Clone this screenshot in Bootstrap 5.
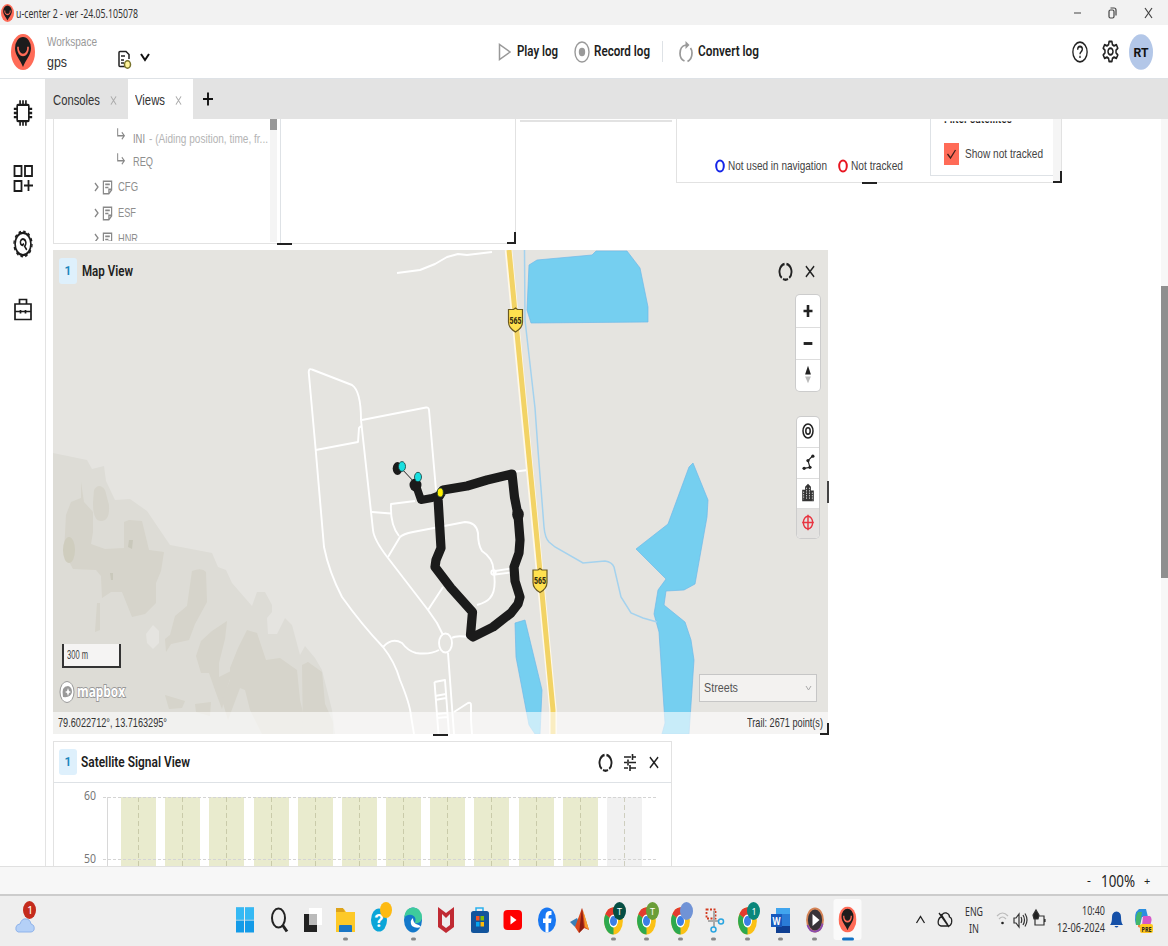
<!DOCTYPE html>
<html lang="en">
<head>
<meta charset="utf-8">
<title>u-center 2</title>
<link href="https://cdn.jsdelivr.net/npm/bootstrap@5.3.0/dist/css/bootstrap.min.css" rel="stylesheet">
<style>
body{width:1168px;height:946px;overflow:hidden;font:14px/16px "Liberation Sans",sans-serif;color:#333;background:#fff}
svg{display:block;flex:none}
/* condensed label: the width is set from data-w */
.fit{display:block;flex:none;white-space:nowrap;overflow:visible}
.fit>span{display:inline-block;transform-origin:0 50%}
.seg{font-family:"Noto Sans",sans-serif}
.lib{font-family:"Liberation Sans",sans-serif}
.titlebar{height:25px;background:#f2f2f2;padding:1px 0 0 1px}
.topbar{height:54px}
.topbar .fit{font-size:14px}
.rail{width:46px;border-right:1px solid #e3e3e3;padding-top:20px}
.rail svg{margin:0 0 37px 13px}
.tabs{height:40px;background:#e3e3e3;font-size:15px}
.tab-on{background:#fff;width:65px}
.work{height:747px;overflow:hidden}
.panel{border:1px solid #e2e2e2;background:#fff;position:relative;flex:none}
.tree{width:223px;height:123px;overflow:hidden;font-size:13.5px;color:#8e8e8e}
.tree .rowline{display:flex;align-items:center;height:26px}
.tree i{width:7px;background:#f4f4f4;position:absolute;left:216px;top:0;height:123px}
.tree i:before{content:"";display:block;height:11px;background:#999}
.grip{position:absolute;background:#222}
.corner{position:absolute;width:9px;height:12px;border:solid #222;border-width:0 2px 2px 0;right:-1px;bottom:-1px}
.num{width:18px;height:26px;background:#def0fc;color:#1a86bd;border-radius:3px;font:600 12px Roboto,sans-serif}
.ttl{font-family:Roboto,sans-serif;font-weight:600;font-size:14.5px!important;color:#1d1d1d;padding-top:1px}
.over{position:absolute}
.ctl{width:24px;background:#fff;border-radius:4px;box-shadow:0 0 0 1px #ccc}
.ctl>svg+svg{border-top:1px solid #ddd}
.foot{left:0;right:0;bottom:0;height:22px;background:rgba(255,255,255,.6);font-size:13px}
.scale{left:9px;top:394px;width:59px;height:24px;border:2px solid #333;border-top:0;background:#f5f4f3;font-size:12px;color:#444;padding:3px 0 0 3px}
.sel{left:646px;top:424px;width:118px;height:28px;border:1px solid #c6c6c6;background:#f3f2f0;color:#555;font-size:13.5px}
.bars{left:67px;top:14px;gap:9.18px}
.bars div{width:35px;height:72px;flex:none;background:repeating-linear-gradient(180deg,rgba(150,150,110,.38) 0 5px,transparent 5px 8px) 17px 0/1px 72px no-repeat #e9ebce}
.bars div:last-child{background-color:#f1f1f1}
.dash{left:49px;width:553px;border-top:1px dashed #d4d4d4}
.axis{left:53px;top:14px;height:72px;border-left:1px solid #d8d8d8}
.status{height:28px;background:#f7f7f7;border-top:1px solid #e0e0e0;padding-left:1087px}
.task{height:52px;background:#eee;border-top:2px solid #ccc}
.task svg.ap{width:33.5px;height:50px}
.sbar{width:7px;height:747px;background:#f7f7f7;padding-top:167px}
.sbar div{height:292px;background:#8f8f8f}
</style>
</head>
<body class="d-flex flex-column">
<svg width="0" height="0" class="position-absolute">
<defs>
<g id="logo"><circle cx="12" cy="12" r="12" fill="#ff6b57"/><path d="M12 22C9 17 4 14 4 9.500a8 7.500 0 0 1 16 0C20 14 15 17 12 22z" fill="#1c1c1c"/><path d="M7 8.500v1a5 4.500 0 0 0 10 0v-1" fill="none" stroke="#ff6b57" stroke-width="1.700"/></g>
<g id="ring" fill="none" stroke="#222" stroke-width="3"><path d="M10.500 2.500A10 10 0 0 0 6 20M8 21.500a10 10 0 0 0 8 0M18 20A10 10 0 0 0 13.500 2.500"/></g>
<path id="cross" d="M3 3L21 21M21 3L3 21" fill="none"/>
<g id="note" fill="none" stroke="#888" stroke-width="2.600"><path d="M3 2h18v14l-6 6H3zM21 15h-6v7M7 7h10M7 12h7"/></g>
<g id="sub" fill="none" stroke="#888" stroke-width="2.400"><path d="M4 2v13h16M14 9l6 6-6 6"/></g>
<g id="shield"><path d="M-7-10.500h5l2-1.500 2 1.500h5V2Q7 8 0 12Q-7 8-7 2z" fill="#ffe14f" stroke="#6b5a20" stroke-width="1.200"/><text y="3.500" text-anchor="middle" font-family="Roboto, sans-serif" font-weight="900" font-size="9.500" textLength="12" lengthAdjust="spacingAndGlyphs" fill="#332c10">565</text></g>
<g id="chrome"><g transform="translate(17.500 25) scale(.78 1.120)"><circle r="12" fill="#fbc116"/><path d="M0 0L-10.400-6A12 12 0 0 1 10.400-6z" fill="#e33b2e"/><path d="M0 0L0 12A12 12 0 0 1-10.400-6z" fill="#2da94f"/><path d="M0-6H10.400A12 12 0 0 0-10.400-6z" fill="#e33b2e"/><circle r="5.800" fill="#fff"/><circle r="4.500" fill="#3b7fe6"/></g></g>
<rect id="dot" x="14" y="41.500" width="5" height="3" rx="1.500" fill="#888"/>
</defs></svg>

<div class="titlebar d-flex align-items-center seg">
<svg width="13" height="18" viewBox="0 0 24 24" preserveAspectRatio="none"><use href="#logo"/></svg>
<div class="fit" style="margin-left:2px;font-size:13px" data-w="122">u-center 2 - ver -24.05.105078</div>
<svg class="ms-auto" width="96" height="20" viewBox="0 0 96 20" fill="none" stroke="#444" stroke-width="1.200"><path d="M2 10h7M73 5l7 10M80 5l-7 10"/><rect x="37" y="7" width="5" height="8" rx="1.500"/><path d="M38.500 5h3.500q2 0 2 2v5.500"/></svg>
</div>

<div class="topbar d-flex align-items-center">
<svg style="margin-left:11px" width="24" height="36" viewBox="0 0 24 24" preserveAspectRatio="none"><use href="#logo"/></svg>
<div style="margin-left:12px;width:71px"><div class="fit mb-1" style="font-size:13px;color:#999" data-w="50">Workspace</div><div class="fit" data-w="20" style="font-size:15px">gps</div></div>
<svg style="margin-top:15px" width="14" height="19" viewBox="0 0 14 19" fill="none" stroke="#222" stroke-width="1.500"><path d="M7 16.500H2Q1 16.500 1 15.500V2.500Q1 1.500 2 1.500H8l3 3V9M3 6h4M3 10h3M3 13h3"/><ellipse cx="9.500" cy="14.500" rx="3" ry="3.700" fill="#fff49a" stroke="#77722c"/></svg>
<svg style="margin:11px 0 0 8px" width="10" height="9" viewBox="0 0 10 9"><path d="M1 1l4 6 4-6" fill="none" stroke="#111" stroke-width="2"/></svg>
<svg style="margin-left:348px" width="13" height="20" viewBox="0 0 13 20"><path d="M1.500 2.500v15L12 10z" fill="none" stroke="#999" stroke-width="1.500"/></svg>
<div class="fit ttl" style="margin-left:6px" data-w="41">Play log</div>
<svg style="margin-left:16px" width="16" height="22" viewBox="0 0 16 22"><ellipse cx="8" cy="11" rx="7" ry="10" fill="none" stroke="#999" stroke-width="1.400"/><ellipse cx="8" cy="11" rx="3.200" ry="4.200" fill="#999"/></svg>
<div class="fit ttl" style="margin-left:4px" data-w="56">Record log</div>
<div class="border-start" style="height:21px;margin-left:12px;width:17px"></div>
<svg width="14" height="22" viewBox="0 0 14 22" fill="none" stroke="#999" stroke-width="1.700"><path d="M5.500 20Q1 18 1 12.500Q1 5 7 4M8.500 20.500Q13 18 13 12Q13 9 11.500 7"/><path d="M6.500 0l4 4-4 4z" fill="#999" stroke="none"/></svg>
<div class="fit ttl" style="margin-left:5px" data-w="61">Convert log</div>
<div class="ms-auto d-flex align-items-center" style="gap:14px;margin-right:15px">
<svg width="16" height="22" viewBox="0 0 24 24" preserveAspectRatio="none" fill="none" stroke="#222" stroke-width="2"><circle cx="12" cy="12" r="10.700"/><path d="M8.500 9.500q0-3.500 3.500-3.500t3.500 3q0 1.500-1.800 2.700-1.700 1-1.700 2.800M12 16v2.500"/></svg>
<svg width="17" height="23" viewBox="0 0 24 24" preserveAspectRatio="none" fill="none" stroke="#222" stroke-width="2.100" stroke-linejoin="round"><path d="M10 1.500h4l.7 3.300 2.300 1.300 3.300-1.100 2 3.500-2.500 2.300v2.500l2.500 2.300-2 3.500-3.300-1.100-2.300 1.300-.7 3.200h-4l-.7-3.200L7 18l-3.300 1.100-2-3.500 2.500-2.300v-2.500L1.700 8.500l2-3.500L7 6.100l2.300-1.300z"/><circle cx="12" cy="12" r="3.500"/></svg>
<svg style="margin-left:-4px" width="24" height="36" viewBox="0 0 24 36"><ellipse cx="12" cy="18" rx="12" ry="17.800" fill="#b3c7e8"/><text x="4.500" y="22.500" font-size="13.500" font-weight="700" font-family="Roboto, sans-serif" textLength="15" lengthAdjust="spacingAndGlyphs" fill="#111">RT</text></svg>
</div>
</div>

<div class="d-flex border-top" style="height:788px">
<div class="rail">
<svg width="20" height="28" viewBox="0 0 24 24" preserveAspectRatio="none" fill="none" stroke="#1c1c1c" stroke-width="2"><rect x="5" y="5" width="14" height="14" rx="1"/><path d="M8.500 1v4M12 1v4M15.500 1v4M8.500 19v4M12 19v4M15.500 19v4M1 8.500h4M1 12h4M1 15.500h4M19 8.500h4M19 12h4M19 15.500h4"/></svg>
<svg style="margin-bottom:38px" width="20" height="28" viewBox="0 0 20 28" fill="none" stroke="#1c1c1c" stroke-width="1.800"><path d="M1.500 2h7v10h-7zM12 2h7v10h-7zM1.500 17h7v10h-7zM11 21.500h9M15.500 16v11"/></svg>
<svg width="20" height="28" viewBox="0 0 24 24" preserveAspectRatio="none" fill="none" stroke="#1c1c1c"><circle cx="12" cy="12" r="9.500" stroke-width="2"/><circle cx="12" cy="12" r="10.800" stroke-width="1.600" stroke-dasharray="2.900 2.750"/><path d="M9 9.500a3.500 3.500 0 0 1 6.500 1.500q0 2-1.500 3l2.500 3M9 9.500q-.5 3.500 2.500 3.500l1.500-1.500" stroke-width="1.800"/></svg>
<svg width="20" height="28" viewBox="0 0 20 28" fill="none" stroke="#1c1c1c" stroke-width="1.700"><path d="M2 9h16v15.500H2zM6.500 9V4.500h7V9M2 16.500h16M7.500 15v3.500M12.500 15v3.500"/></svg>
</div>
<div class="flex-grow-1">
<div class="tabs d-flex align-items-stretch">
<div class="d-flex align-items-center" style="width:82px;padding:2px 0 0 7px"><div class="fit" data-w="47">Consoles</div><svg style="margin-left:10px" width="7" height="11" viewBox="0 0 24 24" preserveAspectRatio="none" stroke="#aaa" stroke-width="3"><use href="#cross"/></svg></div>
<div class="tab-on d-flex align-items-center" style="padding:2px 0 0 7px"><div class="fit" data-w="30">Views</div><svg style="margin-left:10px" width="7" height="11" viewBox="0 0 24 24" preserveAspectRatio="none" stroke="#aaa" stroke-width="3"><use href="#cross"/></svg></div>
<svg class="align-self-center" style="margin-left:10px" width="10" height="14" viewBox="0 0 10 14"><path d="M0 7h10M5 .5v13" stroke="#111" stroke-width="1.900"/></svg>
</div>
<div class="d-flex">
<div class="work flex-grow-1" style="padding-left:7px">
<div class="d-flex align-items-start" style="height:131px">
<div class="panel d-flex border-top-0" style="width:463px;height:125px">
<div class="tree">
<div class="rowline" style="height:23px;padding:16px 0 0 62px"><svg width="10" height="14" style="margin-top:-9px" viewBox="0 0 24 24" preserveAspectRatio="none"><use href="#sub"/></svg><div class="fit" style="margin-left:7px" data-w="12">INI</div><div class="fit" style="margin-left:4px;color:#b4b4b4" data-w="119">- (Aiding position, time, fr...</div></div>
<div class="rowline" style="height:32px;padding:8px 0 0 62px"><svg width="10" height="14" style="margin-top:-7px" viewBox="0 0 24 24" preserveAspectRatio="none"><use href="#sub"/></svg><div class="fit" style="margin-left:7px" data-w="20">REQ</div></div>
<div class="rowline" style="padding-left:39px"><svg width="7" height="10" viewBox="0 0 7 10"><path d="M2 1l3 4-3 4" fill="none" stroke="#888" stroke-width="1.300"/></svg><svg style="margin:0 5px 0 2px" width="11" height="15" viewBox="0 0 24 24" preserveAspectRatio="none"><use href="#note"/></svg><div class="fit" data-w="20">CFG</div></div>
<div class="rowline" style="padding-left:39px"><svg width="7" height="10" viewBox="0 0 7 10"><path d="M2 1l3 4-3 4" fill="none" stroke="#888" stroke-width="1.300"/></svg><svg style="margin:0 5px 0 2px" width="11" height="15" viewBox="0 0 24 24" preserveAspectRatio="none"><use href="#note"/></svg><div class="fit" data-w="18">ESF</div></div>
<div class="rowline" style="padding-left:39px;height:15px;overflow:hidden;align-items:flex-start"><svg style="margin-top:7px" width="7" height="10" viewBox="0 0 7 10"><path d="M2 1l3 4-3 4" fill="none" stroke="#888" stroke-width="1.300"/></svg><svg style="margin:6px 5px 0 2px" width="11" height="15" viewBox="0 0 24 24" preserveAspectRatio="none"><use href="#note"/></svg><div class="fit" style="margin-top:5px" data-w="20">HNR</div></div>
<i></i></div>
<div class="border-start" style="margin-left:3px"></div>
<b class="grip" style="left:223px;bottom:-2px;width:15px;height:2px"></b><b class="corner"></b>
</div>
<div style="margin-left:4px;width:152px;height:3px;border-bottom:2px solid #e2e2e2"></div>
<div class="panel d-flex border-top-0" style="margin-left:4px;width:386px;height:64px;color:#444;font-size:13px">
<div class="d-flex align-items-center" style="width:254px;padding:31px 0 0 38px"><svg width="10" height="14"><ellipse cx="5" cy="7" rx="3.800" ry="5.500" fill="none" stroke="#1525e8" stroke-width="2"/></svg><div class="fit" style="margin-left:3px" data-w="99">Not used in navigation</div><svg style="margin-left:11px" width="10" height="14"><ellipse cx="5" cy="7" rx="3.800" ry="5.500" fill="none" stroke="#e81520" stroke-width="2"/></svg><div class="fit" style="margin-left:3px" data-w="52">Not tracked</div></div>
<div class="border-start border-bottom" style="width:124px;height:57px;padding-left:13px"><div class="d-flex align-items-end" style="height:7px"><div class="fit ttl" style="font-size:13px!important;margin-bottom:-1px;clip-path:inset(11px 0 0 0)" data-w="68">Filter satellites</div></div>
<div class="d-flex align-items-center" style="margin-top:17px"><svg width="15" height="22" viewBox="0 0 15 22"><path d="M0 0h15v22H0z" fill="#ff6b57"/><path d="M3.500 11l3 4 5-8" fill="none" stroke="#40201c" stroke-width="1.300"/></svg><div class="fit" style="margin-left:6px" data-w="78">Show not tracked</div></div></div>
<div style="width:8px;background:#f5f5f5;height:63px"></div>
<b class="grip" style="left:185px;bottom:-2px;width:15px;height:2px"></b><b class="corner"></b>
</div>
</div>

<div class="panel border-0" style="width:775px;height:484px;background:#e5e4e0">
<svg width="775" height="484" viewBox="53 250 775 484" fill="none">
<path d="M53 453L87 460L92 469L104 466L106 481L115 500L130 499L147 511L170 545L212 553L218 567L226 570L232 583L252 606L257 592L265 592L272 605V612L267 618L268 634H277L285 618L292 625L300 655L305 646L315 658L322 670L332 710L335 734H53z" fill="#dddcd6"/>
<g fill="#d6d4ca" opacity=".9"><path d="M81 482L84 502L93 512V532L91 544L105 549L124 548V522L129 520L142 521L149 550L164 552L161 571L156 583V603L145 614L132 617L122 592L111 592L102 598L101 576L96 570L73 569L64 552L66 515L71 502L81 498z"/><path d="M94 490q5-8 11 0l4 15q1 16-8 16-8 0-8-18z"/><path d="M192 571q10-4 14 1l1 30-12 22-6 16-18 4-5 8-1-13 5-4 5-19 12-10z"/><path d="M227 621l-15 10-11 10-5 15 5 17 8 0 7 20 6 16 4-18 7-21-14 7 0-14 6-24z"/><path d="M238 648L247 630L257 633L266 660L280 658L297 670L300 700L308 734H262L250 710L245 690L240 688L228 720L222 700L230 680V668z"/><path d="M302 665l6-3 14 10 3 32 8 18v12h-30z"/><path d="M165 695l20 6-3 7-13 1zM195 704l16-2-1 14-14-4zM97 603h3l0 27-5 2z"/></g>
<ellipse cx="69" cy="550" rx="6" ry="13" fill="#cfcdbe"/><path d="M129 540h4l-1 9-4-2zM110 573h3v7h-2z" fill="#c9c8bb"/><path d="M146 634l7-9 6 6v12l-6 6-6-6z" fill="#e5e4e0"/>
<g fill="#75cff0" stroke="#6fb9ea" stroke-width=".7"><path d="M529 265L537 260L592 255L596 251H627L640 268L648 307V322L531 323L527 310z"/><path d="M693 463L708 500L707 517L695 584L684 590L666 591L664 605L685 622L691 640L694 660L689 734H662L665 723L659 632L654 614L658 590L666 579L636 549L668 524L689 467z"/><path d="M515 623L525 620L542 690L540 734H535L529 725L516 657z"/></g>
<path d="M524.500 250L525 320L535 408L538 450L544 527Q545 538 549 542L555 547L583 563L605 561Q612 562 614 567L621 597L631 613L643 618L657 622" stroke="#a4d2ee" stroke-width="1.500"/>
<g stroke="#fff" stroke-width="1.900" stroke-linejoin="round"><path d="M397 273L420 270L435 264L447 257L458 254L467 255L492 252"/><path d="M443 635L437 623L428 610L388 558Q374 540 373 530L361 420Q361 391 352 385L312 369.500Q309 368 308.700 372L315.700 450L324 547Q329 572 342 597Q362 625 383 647Q395 662 400 680Q410 704 411 716L414 734"/><path d="M315.700 450L358 442L359 428L361 426M362 420L426 407.500Q428.500 407 429 410L436 490M372 512L391 513.500M415 501L391 504Q390 525 399 536M388 557L400 537Q403 534 413 532L465 522Q476 522 478 533Q478 545 482 551Q493 558 493.500 570Q497 590 490 598Q487 602 477 605M495 571L511 568.500M495 574.500L511 572.500M428 610L443 587M512 472L528 470"/><circle cx="493.500" cy="572.500" r="2.200"/><ellipse cx="445.500" cy="643" rx="6.500" ry="9.500"/><path d="M452 638Q456 635 468 637M439 650Q430 655 416 653Q408 651 402 643Q392 637 383 647M448 653L454 734M434.500 682L445 680L449 734M434.500 682L438.500 734M435 696L446 694M435 700L446 698M437 714L447 713M437 718L447 717M454 712L468 703Q471 702 471 705V720L472 734"/></g>
<path d="M508.500 250L537 545L553 710V734" stroke="#fff8e6" stroke-width="7.500"/><path d="M509 250L537.500 545L553 710V734" stroke="#f2d365" stroke-width="5"/>
<path d="M401 468L416 484" stroke="#222"/>
<g stroke="#1b1b1b" stroke-width="9.200" stroke-linejoin="round" stroke-linecap="round"><path stroke-width="8" d="M415.500 484L421 500L432 498L440 495"/><path d="M438 498L443 490L467 486L487 480L512 474L514.500 497L518 515L520 540L519 553L514 567L515 581L520 597L518 604L511 613L493 627L473 637L470.500 635L472.500 612L451 588L435 567L436 560L441 548L438 498z"/></g>
<g fill="#1b1b1b"><ellipse cx="397.500" cy="468.500" rx="4.800" ry="6.500"/><ellipse cx="415.500" cy="485" rx="6" ry="6.500"/><ellipse cx="518" cy="514.500" rx="5.800" ry="7"/></g>
<g stroke="#173b3b" stroke-width=".8"><ellipse cx="402" cy="466.500" rx="3.500" ry="4.900" fill="#19e0e0"/><ellipse cx="418" cy="477" rx="3.500" ry="4.700" fill="#19e0e0"/><ellipse cx="440.300" cy="492.500" rx="3" ry="4.500" fill="#ffef00"/></g>
<use href="#shield" x="515.500" y="320"/><use href="#shield" x="540" y="580.500"/>
<g transform="translate(67 692)"><ellipse rx="7" ry="10.500" fill="#fff" stroke="#999"/><path d="M-4 5Q-6-6 1-6Q5-5 5 0Q4 6-4 5z" fill="#999"/><path d="M1-4l1 3 2 1-2 1-1 3-1-3-2-1 2-1z" fill="#fff"/></g>
<text x="77" y="697" font-family="Open Sans" font-weight="700" font-size="15.500" textLength="48" lengthAdjust="spacingAndGlyphs" fill="#fff" stroke="#999" stroke-width="1.800" paint-order="stroke">mapbox</text>
</svg>
<div class="over d-flex align-items-center" style="left:6px;top:8px"><div class="num d-flex align-items-center justify-content-center">1</div><div class="fit ttl" style="margin-left:5px" data-w="51">Map View</div></div>
<div class="over d-flex" style="left:725px;top:12px;gap:12px"><svg width="15" height="19" viewBox="0 0 24 24" preserveAspectRatio="none"><use href="#ring"/></svg><svg style="margin-top:3px" width="10" height="13" viewBox="1 1 22 22" preserveAspectRatio="none" stroke="#222" stroke-width="3"><use href="#cross"/></svg></div>
<div class="over ctl" style="left:743px;top:45px"><svg width="24" height="32" viewBox="0 0 24 32"><path d="M7.500 16h9M12 10v12" stroke="#222" stroke-width="2.600"/></svg><svg width="24" height="32" viewBox="0 0 24 32"><path d="M7.500 16h9" stroke="#222" stroke-width="3"/></svg><svg width="24" height="32" viewBox="0 0 24 32"><path d="M9 15l3-9 3 9z" fill="#222"/><path d="M9 17l3 7 3-7z" fill="#bbb"/></svg></div>
<div class="over ctl" style="left:744px;top:167px;width:22px"><svg width="22" height="30" viewBox="0 0 22 30" fill="none" stroke="#222" stroke-width="1.500"><ellipse cx="11" cy="14" rx="5" ry="7"/><ellipse cx="11" cy="14" rx="2.200" ry="3.200"/></svg>
<svg width="22" height="31" viewBox="0 0 22 31"><path d="M7 21l6-1-2-7 5-5" fill="none" stroke="#222" stroke-width="1.200"/><g fill="#222"><circle cx="7" cy="21" r="1.700"/><circle cx="13" cy="20" r="1.700"/><circle cx="11" cy="13" r="1.700"/><circle cx="16" cy="8.500" r="1.700"/></g></svg>
<svg width="22" height="30" viewBox="0 0 22 30"><path d="M5 23V11h3V8l3-3 3 3v4h3v11z" fill="#333"/><path d="M6.500 13v8M9.500 9v12M12.500 9v12M15.500 14v8" stroke="#ddd" stroke-width=".9" stroke-dasharray="1.500 1"/></svg>
<svg style="background:#e3e2e0;border-radius:0 0 4px 4px" width="22" height="30" viewBox="0 0 22 30" fill="none" stroke="#e83440" stroke-width="1.500"><ellipse cx="11" cy="14" rx="4.800" ry="6.500"/><path d="M11 6v16M5 14h12"/></svg></div>
<div class="over scale lib"><div class="fit" data-w="21">300 m</div></div>
<div class="over sel d-flex align-items-center"><div class="fit" style="margin-left:4px" data-w="34">Streets</div><svg class="ms-auto me-1" width="7" height="6"><path d="M1 1l2.500 4L6 1" fill="none" stroke="#aaa"/></svg></div>
<div class="over foot d-flex align-items-center justify-content-between lib" style="padding:0 5px"><div class="fit" data-w="109">79.6022712°, 13.7163295°</div><div class="fit" data-w="76">Trail: 2671 point(s)</div></div>
<b class="grip" style="left:380px;bottom:-2px;width:15px;height:2px"></b><b class="grip" style="right:-1px;top:231px;width:2px;height:22px;background:#444"></b><b class="corner"></b>
</div>

<div class="panel" style="width:619px;height:140px;margin-top:7px">
<div class="d-flex align-items-center border-bottom" style="height:41px;padding:0 12px 0 5px"><div class="num d-flex align-items-center justify-content-center">1</div><div class="fit ttl" style="margin-left:4px" data-w="109">Satellite Signal View</div>
<svg class="ms-auto" width="15" height="19" viewBox="0 0 24 24" preserveAspectRatio="none"><use href="#ring"/></svg><svg style="margin:0 13px 0 11px" width="12" height="17" viewBox="0 0 12 17"><path d="M0 3h7M9 3h3M8.500 0v6M0 8.500h3M5 8.500h7M4 5.500v6M0 14h4M6 14h6M6 11v6" stroke="#222" stroke-width="1.600"/></svg><svg width="10" height="13" viewBox="1 1 22 22" preserveAspectRatio="none" stroke="#222" stroke-width="3"><use href="#cross"/></svg></div>
<div class="position-relative" style="padding:4px 0 0 30px;color:#777;font-size:13px"><div class="fit seg" data-w="12">60</div><div class="fit seg" style="margin-top:48px;line-height:14px" data-w="12">50</div>
<div class="over bars d-flex"><div></div><div></div><div></div><div></div><div></div><div></div><div></div><div></div><div></div><div></div><div></div><div></div></div>
<div class="over dash" style="top:14px"></div><div class="over dash" style="top:76px"></div><div class="over axis"></div></div>
</div>
</div>
<div class="sbar"><div></div></div>
</div>
</div>
</div>

<div class="status d-flex align-items-center seg" style="color:#222"><div style="width:14px;font-size:12px">-</div><div class="fit" style="font-size:15.500px" data-w="34">100%</div><div style="margin-left:9px;font-size:11px">+</div></div>

<div class="task d-flex align-items-start seg">
<svg width="228" height="50"><path d="M18 36q-3-1-2-5 1-3 4-3 2-6 6-5 4 0 5 5 4 1 3 6-1 2-3 2z" fill="#b4d0f7" stroke="#8fb3ea"/><ellipse cx="29.500" cy="14" rx="6.500" ry="9" fill="#c42b1c"/><text x="27" y="18" font-size="11" fill="#fff">1</text></svg>
<svg class="ap" viewBox="0 0 33.500 50"><path d="M8 11.500h8v12H8zM17 11.500h9v12h-9zM8 24.500h8v12H8zM17 24.500h9v12h-9z" fill="#149be8"/><path d="M8 11.500h8v12H8zM17 11.500h9v12h-9z" fill="#35b9f4"/></svg>
<svg class="ap" viewBox="0 0 33.500 50" fill="none" stroke="#222" stroke-width="2"><ellipse cx="16.500" cy="22" rx="6.500" ry="9.500"/><path d="M20.500 29l4.500 6.500" stroke-width="3"/></svg>
<svg class="ap" viewBox="0 0 33.500 50"><path d="M14 12h13v17H14z" fill="#fff"/><path d="M9 18h13v18H9z" fill="#222"/><path d="M14 18h8v11h-8z" fill="#bbb"/></svg>
<svg class="ap" viewBox="0 0 33.500 50"><path d="M7 13h8l2 3h9v20H7z" fill="#fdc928"/><path d="M7 12h7l2 4H7z" fill="#dda31a"/><path d="M10 36v-6q0-1 1-1h11q1 0 1 1v6z" fill="#1a76c5"/><use href="#dot"/></svg>
<svg class="ap" viewBox="0 0 33.500 50"><ellipse cx="17" cy="24" rx="8" ry="11.500" fill="#0aa5d8"/><text x="12.500" y="31" font-size="19" font-weight="700" fill="#fff" font-family="Roboto" textLength="9" lengthAdjust="spacingAndGlyphs">?</text><ellipse cx="24" cy="14" rx="6" ry="8" fill="#fdba12"/></svg>
<svg class="ap" viewBox="0 0 33.500 50"><ellipse cx="17" cy="24" rx="9" ry="12.500" fill="#1378ca"/><path d="M8 22Q9 11.500 17 11.500Q26 12 26 22Q25 28 19 27Q21 21 16 19Q11 18 8 22z" fill="#3ecb9c"/><path d="M17 22q-4 3-1 8 4 3 9 1-1-2-5-3-3-2-3-6z" fill="#fff"/><use href="#dot" x="1"/></svg>
<svg class="ap" viewBox="0 0 33.500 50"><path d="M9 11l8 6 8-6v20l-8 6-8-6zM13 18v11l4 3 4-3V18l-4 4z" fill="#c02a33" fill-rule="evenodd"/></svg>
<svg class="ap" viewBox="0 0 33.500 50"><path d="M13 15v-3h7v3" fill="none" stroke="#2bb1ee" stroke-width="1.500"/><rect x="8" y="15" width="18" height="22" rx="2.500" fill="#12549c"/><path d="M13 20h3.500v4.500H13z" fill="#f35325"/><path d="M17.500 20H21v4.500h-3.500z" fill="#81bc06"/><path d="M13 26h3.500v4.500H13z" fill="#05a6f0"/><path d="M17.500 26H21v4.500h-3.500z" fill="#ffba08"/></svg>
<svg class="ap" viewBox="0 0 33.500 50"><rect x="7.500" y="14" width="18.500" height="20" rx="4" fill="#f00"/><path d="M14.500 19.500v9l6-4.500z" fill="#fff"/></svg>
<svg class="ap" viewBox="0 0 33.500 50"><ellipse cx="17" cy="24" rx="9" ry="12.500" fill="#1877f2"/><path d="M15.500 36.500V27H13v-4.500h2.500V20q0-5 4.500-5h1.500v4H20q-1.500 0-1.500 2v1.500h3L21 27h-2.500v9.500z" fill="#fff"/></svg>
<svg class="ap" viewBox="0 0 33.500 50"><path d="M7 26l7-4 2 4-4 5z" fill="#3a7fb5"/><path d="M12 31l7-19 7 22-5-2-5 5z" fill="#d9481c"/><path d="M19 12l2 20-5 5z" fill="#8c1d13"/><path d="M20 14l6 20-4-3z" fill="#f39a2d"/></svg>
<svg class="ap" viewBox="0 0 33.500 50"><use href="#chrome" x="-1"/><ellipse cx="22.500" cy="15" rx="6.500" ry="9" fill="#064e43"/><text x="20" y="18.500" font-size="9" fill="#fff">T</text><use href="#dot"/></svg>
<svg class="ap" viewBox="0 0 33.500 50"><use href="#chrome" x="-1"/><ellipse cx="22.500" cy="15" rx="6.500" ry="9" fill="#6a9e38"/><text x="20" y="18.500" font-size="9" fill="#fff">T</text><use href="#dot"/></svg>
<svg class="ap" viewBox="0 0 33.500 50"><use href="#chrome" x="-1"/><ellipse cx="22.500" cy="15" rx="6.500" ry="9" fill="#7093d6"/><use href="#dot"/></svg>
<svg class="ap" viewBox="0 0 33.500 50" fill="none"><path d="M9.500 13.500h9v9h-9z" stroke="#d23b20" stroke-width="1.800" stroke-dasharray="2 1.500"/><path d="M11 25h11M17 15v16" stroke="#aaa" stroke-width="2"/><circle cx="24" cy="25.500" r="2.500" stroke="#2aa5e0" stroke-width="1.500"/><circle cx="16.500" cy="33.500" r="2.500" stroke="#2aa5e0" stroke-width="1.500"/><use href="#dot"/></svg>
<svg class="ap" viewBox="0 0 33.500 50"><use href="#chrome" x="-1"/><ellipse cx="22.500" cy="15" rx="6.500" ry="9" fill="#0a877b"/><text x="20.500" y="18.500" font-size="9" fill="#fff">1</text><use href="#dot"/></svg>
<svg class="ap" viewBox="0 0 33.500 50"><rect x="12" y="12" width="14" height="25" rx="1.500" fill="#2a7cd6"/><path d="M12 12h14v6H12z" fill="#41a5ee"/><path d="M12 30h14v7H12z" fill="#103f91"/><path d="M7 18h11v13H7z" fill="#185abd"/><text x="8.500" y="28.500" font-size="10" font-weight="700" fill="#fff" textLength="8" lengthAdjust="spacingAndGlyphs">W</text><use href="#dot"/></svg>
<svg class="ap" viewBox="0 0 33.500 50"><ellipse cx="17" cy="24" rx="8" ry="11.500" fill="#383338" stroke="#d58355" stroke-width="1.800"/><path d="M9.500 29q2 7 8 6.500 6-1 7-8" fill="none" stroke="#8a4bb0" stroke-width="1.800"/><path d="M14.500 18v12l7-6z" fill="#fff"/><use href="#dot"/></svg>
<svg class="ap" viewBox="0 0 33.500 50"><rect x="2.500" y="3" width="28" height="41" rx="3" fill="#fafafa"/><svg x="7.500" y="10.500" width="18" height="26" viewBox="0 0 24 24" preserveAspectRatio="none"><use href="#logo"/></svg><rect x="11" y="41.500" width="12" height="3" rx="1.500" fill="#1273c4"/></svg>
<svg style="margin-left:50px" width="48" height="50" fill="none" stroke="#222" stroke-width="1.300"><path d="M1.500 27l4-6.500 4 6.500"/><path d="M26 30q-4-1-2.500-6 1-3 3-3 1-5 5-4 3 1 3 4 3 1 2 6-1 3-3 3zM24 17l10 14M26 18l7 11"/></svg>
<div style="margin-left:2px;font-size:12.500px;padding-top:7px;line-height:17px;color:#333"><div class="fit" data-w="18">ENG</div><div class="fit" style="margin-left:4px" data-w="10">IN</div></div>
<svg style="margin-left:13px" width="52" height="50" fill="none" stroke="#333" stroke-width="1.200"><path d="M1 20q5.500-6 11 0M3 23q3.500-4 7 0" stroke="#bbb"/><circle cx="6.500" cy="27" r="1.300" fill="#222" stroke="none"/><path d="M18 22h2l3-4v13l-3-4h-2zM25 21q1.500 3 0 6M27 19q3 5 0 10M29 17.500q4 6.500 0 13"/><path d="M39 20h9v9h-9zM49 23v3"/><path d="M37 19l3-5 3 5-1 4h-4z" fill="#222"/></svg>
<div style="margin-left:8px;width:49px;font-size:12.500px;padding-top:6px;line-height:17px;color:#333"><div class="fit ms-auto" data-w="23">10:40</div><div class="fit ms-auto" data-w="48">12-06-2024</div></div>
<svg style="margin-left:2px" width="52" height="50"><path d="M3 29q2-2 2-8 0-5 4.500-5.500Q14 16 14 21q0 6 2 8zM7.500 30h4q-2 3-4 0z" fill="#1550a8"/><path d="M29 29q-3-12 3-16h7l2 8h-6l-2 8z" fill="#2b8ee0"/><path d="M29 29q-1-9 2-13l4 0-2 13z" fill="#43b66c"/><path d="M36 20h7q3 2 0 10h-8z" fill="#d558c8"/><path d="M31 29h6l-1 4-5-2z" fill="#f08a45"/><rect x="33" y="28" width="13" height="9" rx="2" fill="#ffc71f"/><text x="34.500" y="35.500" font-size="7.500" font-weight="700" textLength="10" lengthAdjust="spacingAndGlyphs" fill="#222">PRE</text></svg>
</div>
<script src="https://cdn.jsdelivr.net/npm/bootstrap@5.3.0/dist/js/bootstrap.bundle.min.js"></script>
<script>
document.querySelectorAll('.fit').forEach(function(e){
  var s=document.createElement('span');
  s.textContent=e.textContent;e.textContent='';e.appendChild(s);
  var w=+e.dataset.w;
  s.style.transform='scaleX('+w/s.getBoundingClientRect().width+')';
  e.style.width=w+'px';
});
</script>
</body>
</html>
